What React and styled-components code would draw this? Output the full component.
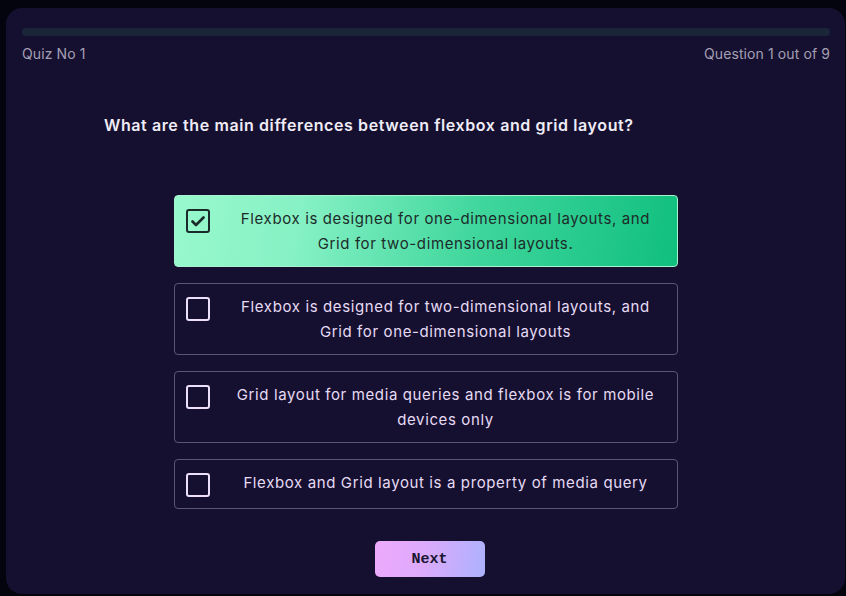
import React, { useState } from "react";
import styled, { createGlobalStyle } from "styled-components";

const Global = createGlobalStyle`
  html, body { margin: 0; padding: 0; background: #04040f; }
  body { font-family: "Inter", "Noto Sans", sans-serif; }
  * { box-sizing: border-box; }
`;

const Page = styled.div`
  padding: 8px 1px 2px 6px;
  height: 596px;
  display: flex;
`;

const Card = styled.div`
  flex: 1;
  background: #161030;
  border-radius: 16px;
  padding: 20px 15px 0 16px;
  display: flex;
  flex-direction: column;
`;

const Progress = styled.div`
  height: 8px;
  border-radius: 4px;
  background: #1b2538;
  overflow: hidden;
`;

const Fill = styled.div`
  height: 100%;
  background: #1b2538;
`;

const Meta = styled.div`
  display: flex;
  justify-content: space-between;
  margin-top: 9px;
  font-size: 14px;
  line-height: 18px;
  color: #a39fb3;
  letter-spacing: 0.1px;
`;

const Body = styled.div`
  width: 644px;
  margin: 0 auto;
  display: flex;
  flex-direction: column;
`;

const Question = styled.h2`
  margin: 51px 0 0 0;
  font-size: 16px;
  line-height: 22px;
  font-weight: 600;
  color: #efecf6;
  letter-spacing: 0.6px;
`;

const Options = styled.div`
  margin: 59px auto 0;
  width: 504px;
  display: flex;
  flex-direction: column;
  gap: 16px;
`;

const Option = styled.div`
  display: flex;
  align-items: flex-start;
  gap: 16px;
  min-height: 50px;
  padding: 10px 12px 10px 11px;
  border-radius: 4px;
  cursor: pointer;
  border: 1px solid ${(p) => (p.$selected ? "#a7f3d0" : "#5b5472")};
  background: ${(p) =>
    p.$selected
      ? "linear-gradient(100deg, #98f9cd 0%, #86f1c4 25%, #3fd69c 60%, #10bf7e 100%)"
      : "transparent"};
  color: ${(p) => (p.$selected ? "#1d2b2a" : "#e6dbf4")};
`;

const Box = styled.div`
  flex: none;
  width: 24px;
  height: 24px;
  margin-top: 3px;
  border-radius: 3px;
  border: 2px solid ${(p) => (p.$checked ? "#1a2a2a" : "#ecdff9")};
  display: flex;
  align-items: center;
  justify-content: center;
`;

const Label = styled.div`
  flex: 1;
  text-align: center;
  font-size: 15px;
  line-height: 25px;
  letter-spacing: 0.62px;
`;

const Footer = styled.div`
  display: flex;
  justify-content: center;
  margin-top: 32px;
`;

const NextButton = styled.button`
  width: 110px;
  height: 36px;
  margin-left: 7px;
  border: none;
  border-radius: 5px;
  background: linear-gradient(100deg, #eeaafb 0%, #dcaafc 45%, #acb2fd 100%);
  color: #1a1530;
  font-family: "Liberation Mono", "DejaVu Sans Mono", monospace;
  font-weight: 700;
  font-size: 15px;
  cursor: pointer;
`;

const options = [
  "Flexbox is designed for one-dimensional layouts, and Grid for two-dimensional layouts.",
  "Flexbox is designed for two-dimensional layouts, and Grid for one-dimensional layouts",
  "Grid layout for media queries and flexbox is for mobile devices only",
  "Flexbox and Grid layout is a property of media query",
];

export default function App() {
  const [selected, setSelected] = useState(0);
  return (
    <>
      <Global />
      <Page>
        <Card>
          <Progress>
            <Fill style={{ width: "0%" }} />
          </Progress>
          <Meta>
            <span>Quiz No 1</span>
            <span>Question 1 out of 9</span>
          </Meta>
          <Body>
            <Question>What are the main differences between flexbox and grid layout?</Question>
            <Options>
              {options.map((o, i) => (
                <Option key={i} $selected={selected === i} onClick={() => setSelected(i)}>
                  <Box $checked={selected === i}>
                    {selected === i && (
                      <svg width="14" height="11" viewBox="0 0 14 11" fill="none">
                        <path d="M1.5 5.5 L5 9 L12.5 1.5" stroke="#1a2a2a" strokeWidth="2.6" strokeLinecap="round" strokeLinejoin="round" />
                      </svg>
                    )}
                  </Box>
                  <Label>{o}</Label>
                </Option>
              ))}
            </Options>
            <Footer>
              <NextButton>Next</NextButton>
            </Footer>
          </Body>
        </Card>
      </Page>
    </>
  );
}
